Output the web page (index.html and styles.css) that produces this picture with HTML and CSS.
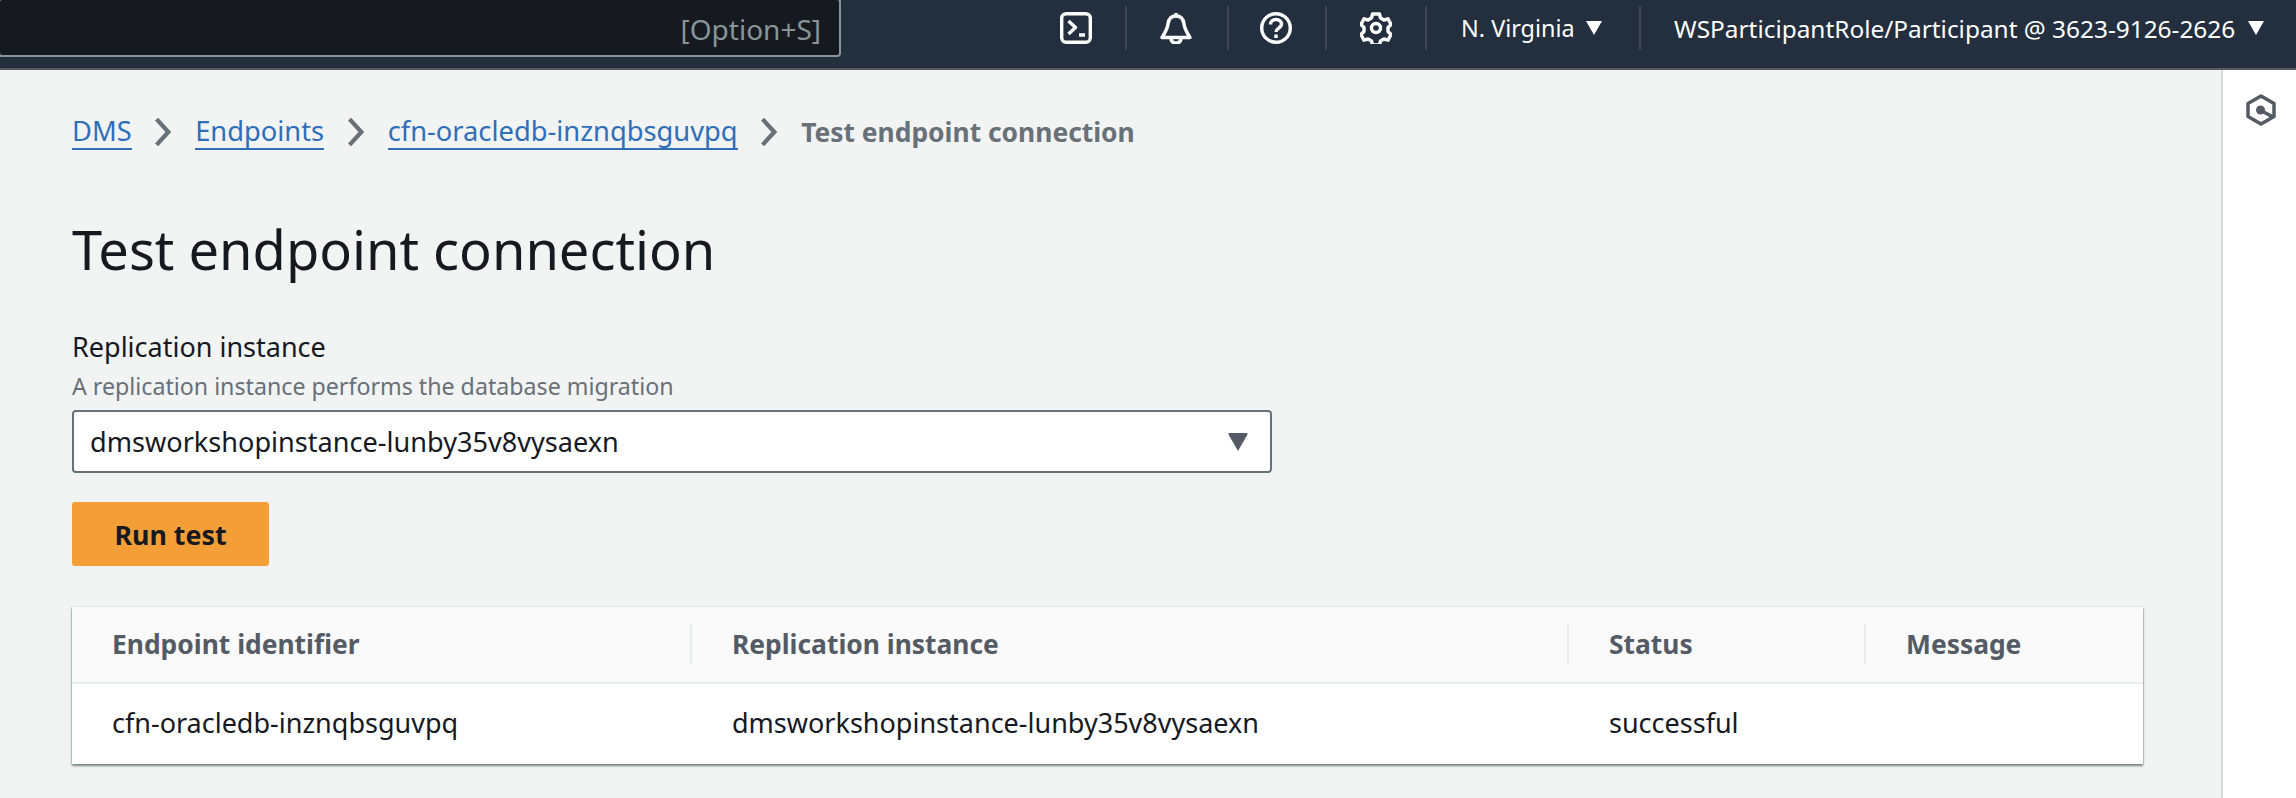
FILE: index.html
```html
<!DOCTYPE html>
<html lang="en">
<head>
<meta charset="utf-8">
<title>Test endpoint connection</title>
<link rel="stylesheet" href="styles.css">
</head>
<body>
<header class="topbar">
  <div class="search"><span class="shortcut">[Option+S]</span></div>
  <div class="tools">
    <div class="tool tool-shell">
      <svg class="ico" viewBox="0 0 32 32" fill="none" stroke="#fff" stroke-width="3.400"><rect x="1.700" y="1.700" width="28.600" height="28.600" rx="4.500"/><path d="M8.500 9l7 6.500-7 6.500M19 23h6" stroke-linejoin="round"/></svg>
    </div>
    <div class="tool tool-bell">
      <svg class="ico" viewBox="0 0 32 32" fill="none" stroke="#fff" stroke-width="3.400" stroke-linejoin="round"><path d="M16 1v3M16 4c-5 0-7.500 3.500-8 8-.5 5-2.500 8-6 13.500h28c-3.500-5.500-5.500-8.500-6-13.500-.5-4.500-3-8-8-8z"/><path d="M11 26c0 3.500 2 5 5 5s5-1.500 5-5"/></svg>
    </div>
    <div class="tool tool-help">
      <svg class="ico" viewBox="0 0 32 32" fill="none" stroke="#fff" stroke-width="3.400"><circle cx="16" cy="16" r="14.300"/><path d="M10.500 12.500c0-3.200 2.400-5 5.500-5s5.500 1.800 5.500 4.600c0 4.200-5.500 3.900-5.500 8"/><path d="M16 22.500v3.500"/></svg>
    </div>
    <div class="tool tool-gear">
      <svg class="ico" viewBox="0 0 32 32" fill="none" stroke="#fff" stroke-width="3.400" stroke-linejoin="round"><path d="M12.500 2h7l1 4 3.500 2 4-1.200 3 5.700-3 3v4l3 3-3 5.700-4-1.200-3.500 2-1 4h-7l-1-4-3.500-2-4 1.200-3-5.700 3-3v-4l-3-3 3-5.700 4 1.200 3.500-2z"/><circle cx="16" cy="16" r="4.500"/></svg>
    </div>
    <div class="menu region"><span>N. Virginia</span><i class="caret"></i></div>
    <div class="menu account"><span>WSParticipantRole/Participant @ 3623-9126-2626</span><i class="caret"></i></div>
  </div>
</header>
<div class="shell">
  <main class="content">
    <nav class="crumbs">
      <a href="#">DMS</a>
      <svg class="chev" viewBox="0 0 18 28" fill="none" stroke="#687078" stroke-width="4"><path d="M3 2l11 12L3 26"/></svg>
      <a href="#">Endpoints</a>
      <svg class="chev" viewBox="0 0 18 28" fill="none" stroke="#687078" stroke-width="4"><path d="M3 2l11 12L3 26"/></svg>
      <a href="#">cfn-oracledb-inznqbsguvpq</a>
      <svg class="chev" viewBox="0 0 18 28" fill="none" stroke="#687078" stroke-width="4"><path d="M3 2l11 12L3 26"/></svg>
      <span class="here">Test endpoint connection</span>
    </nav>
    <h1>Test endpoint connection</h1>
    <div class="label">Replication instance</div>
    <div class="hint">A replication instance performs the database migration</div>
    <div class="select"><span>dmsworkshopinstance-lunby35v8vysaexn</span><svg class="select-caret" viewBox="0 0 20 18"><path d="M1.500 0h17q1.500 0 1 1.500L10 18 .5 1.500Q0 0 1.500 0z" fill="#545b64"/></svg></div>
    <button class="run">Run test</button>
    <section class="table">
      <div class="row head">
        <div class="cell">Endpoint identifier</div>
        <div class="cell sep">Replication instance</div>
        <div class="cell sep">Status</div>
        <div class="cell sep">Message</div>
      </div>
      <div class="row body">
        <div class="cell">cfn-oracledb-inznqbsguvpq</div>
        <div class="cell">dmsworkshopinstance-lunby35v8vysaexn</div>
        <div class="cell">successful</div>
        <div class="cell"></div>
      </div>
    </section>
  </main>
  <aside class="side">
    <svg class="side-ico" viewBox="0 0 30 32" fill="none" stroke="#545b64" stroke-width="3.500"><path d="M15 2l13 7.500v13L15 30 2 22.500v-13z" stroke-linejoin="round"/><circle cx="14.500" cy="16" r="4.500" fill="#545b64" stroke="none"/><path d="M15 16.500l12 6.500"/></svg>
  </aside>
</div>
</body>
</html>
```
FILE: styles.css
```css
* { box-sizing: border-box; }
html, body { margin: 0; height: 100%; }
body {
  height: 798px;
  overflow: hidden;
  background: #f2f3f3;
  font-family: "Noto Sans", sans-serif;
  color: #16191f;
  font-size: 27px;
}
.topbar {
  height: 70px;
  display: flex;
  background: #232f3e;
  border-bottom: 2px solid #545b64;
  color: #fff;
}
.search {
  width: 843px;
  height: 59px;
  margin-left: -2px;
  margin-top: -2px;
  background: #16191f;
  border: 2px solid #879596;
  border-radius: 4px;
  display: flex;
  align-items: center;
  justify-content: flex-end;
  padding: 2px 18px 0 0;
  color: #879596;
  font-size: 28px;
}
.tools { flex: 1; display: flex; align-items: flex-start; height: 68px; }
.tool {
  height: 44px;
  margin-top: 6px;
  display: flex;
  align-items: center;
  border-right: 2px solid #414750;
}
.tool-shell { width: 286px; justify-content: flex-end; padding-right: 33px; }
.tool-bell { width: 102px; padding-left: 33px; }
.tool-help { width: 98px; padding-left: 31px; }
.tool-gear { width: 100px; padding-left: 33px; }
.ico { width: 32px; height: 32px; }
.menu { display: flex; align-items: center; height: 44px; margin-top: 6px; font-size: 24.400px; }
.region { width: 214px; padding-left: 34px; border-right: 2px solid #414750; gap: 11px; font-size: 23.400px; }
.account { padding-left: 33px; gap: 13px; }
.caret { width: 0; height: 0; border-left: 8.500px solid transparent; border-right: 8.500px solid transparent; border-top: 14px solid #fff; }
.shell { display: flex; height: 728px; }
.content { flex: 1; padding: 0 78px 0 72px; }
.side { width: 75px; background: #fff; border-left: 2px solid #d5dbdb; display: flex; justify-content: center; align-items: flex-start; padding-top: 24px; }
.side-ico { width: 30px; height: 32px; margin-left: 3px; }
.crumbs { display: flex; align-items: center; gap: 21.750px; height: 36px; margin-top: 44px; font-size: 27.300px; }
.crumbs a { color: #2f6fb9; text-decoration: none; border-bottom: 2px solid #2f6fb9; line-height: 34px; }
.chev { width: 20px; height: 30px; }
.here { color: #687078; font-weight: 700; font-size: 26.400px; }
h1 { margin: 0; font-size: 54.200px; font-weight: 400; line-height: 70px; margin-top: 64px; }
.label { margin-top: 46px; line-height: 34px; }
.hint { color: #687078; font-size: 23.200px; line-height: 30px; margin-top: 7px; }
.select {
  width: 1200px;
  height: 63px;
  margin-top: 9px;
  background: #fff;
  border: 2px solid #687078;
  border-radius: 4px;
  display: flex;
  align-items: center;
  justify-content: space-between;
  padding: 0 22px 0 16px;
  font-size: 27.100px;
}
.select-caret { width: 20px; height: 18px; }
.run {
  display: block;
  width: 197px;
  height: 64px;
  margin-top: 29px;
  border: 0;
  border-radius: 3px;
  background: #f39e36;
  color: #16191f;
  font: 700 26.800px "Noto Sans", sans-serif;
}
.table {
  margin-top: 41px;
  width: 2071px;
  background: #fff;
  box-shadow: 0 2px 2px rgba(0,28,36,.5), 0 -1px 2px rgba(0,28,36,.03), 1px 0 1px rgba(0,28,36,.1), -1px 0 1px rgba(0,28,36,.1);
}
.row { display: grid; grid-template-columns: 618px 877px 297px 279px; align-items: center; }
.head { height: 77px; background: #fafafa; border-bottom: 2px solid #eaeded; color: #545b64; font-weight: 700; font-size: 26.400px; padding-bottom: 2px; }
.body { height: 80px; font-size: 27px; padding-bottom: 2px; }
.cell { padding-left: 40px; line-height: 40px; }
.body .cell:nth-child(n+2) { padding-left: 42px; }
.sep { border-left: 2px solid #eaeded; }
```
